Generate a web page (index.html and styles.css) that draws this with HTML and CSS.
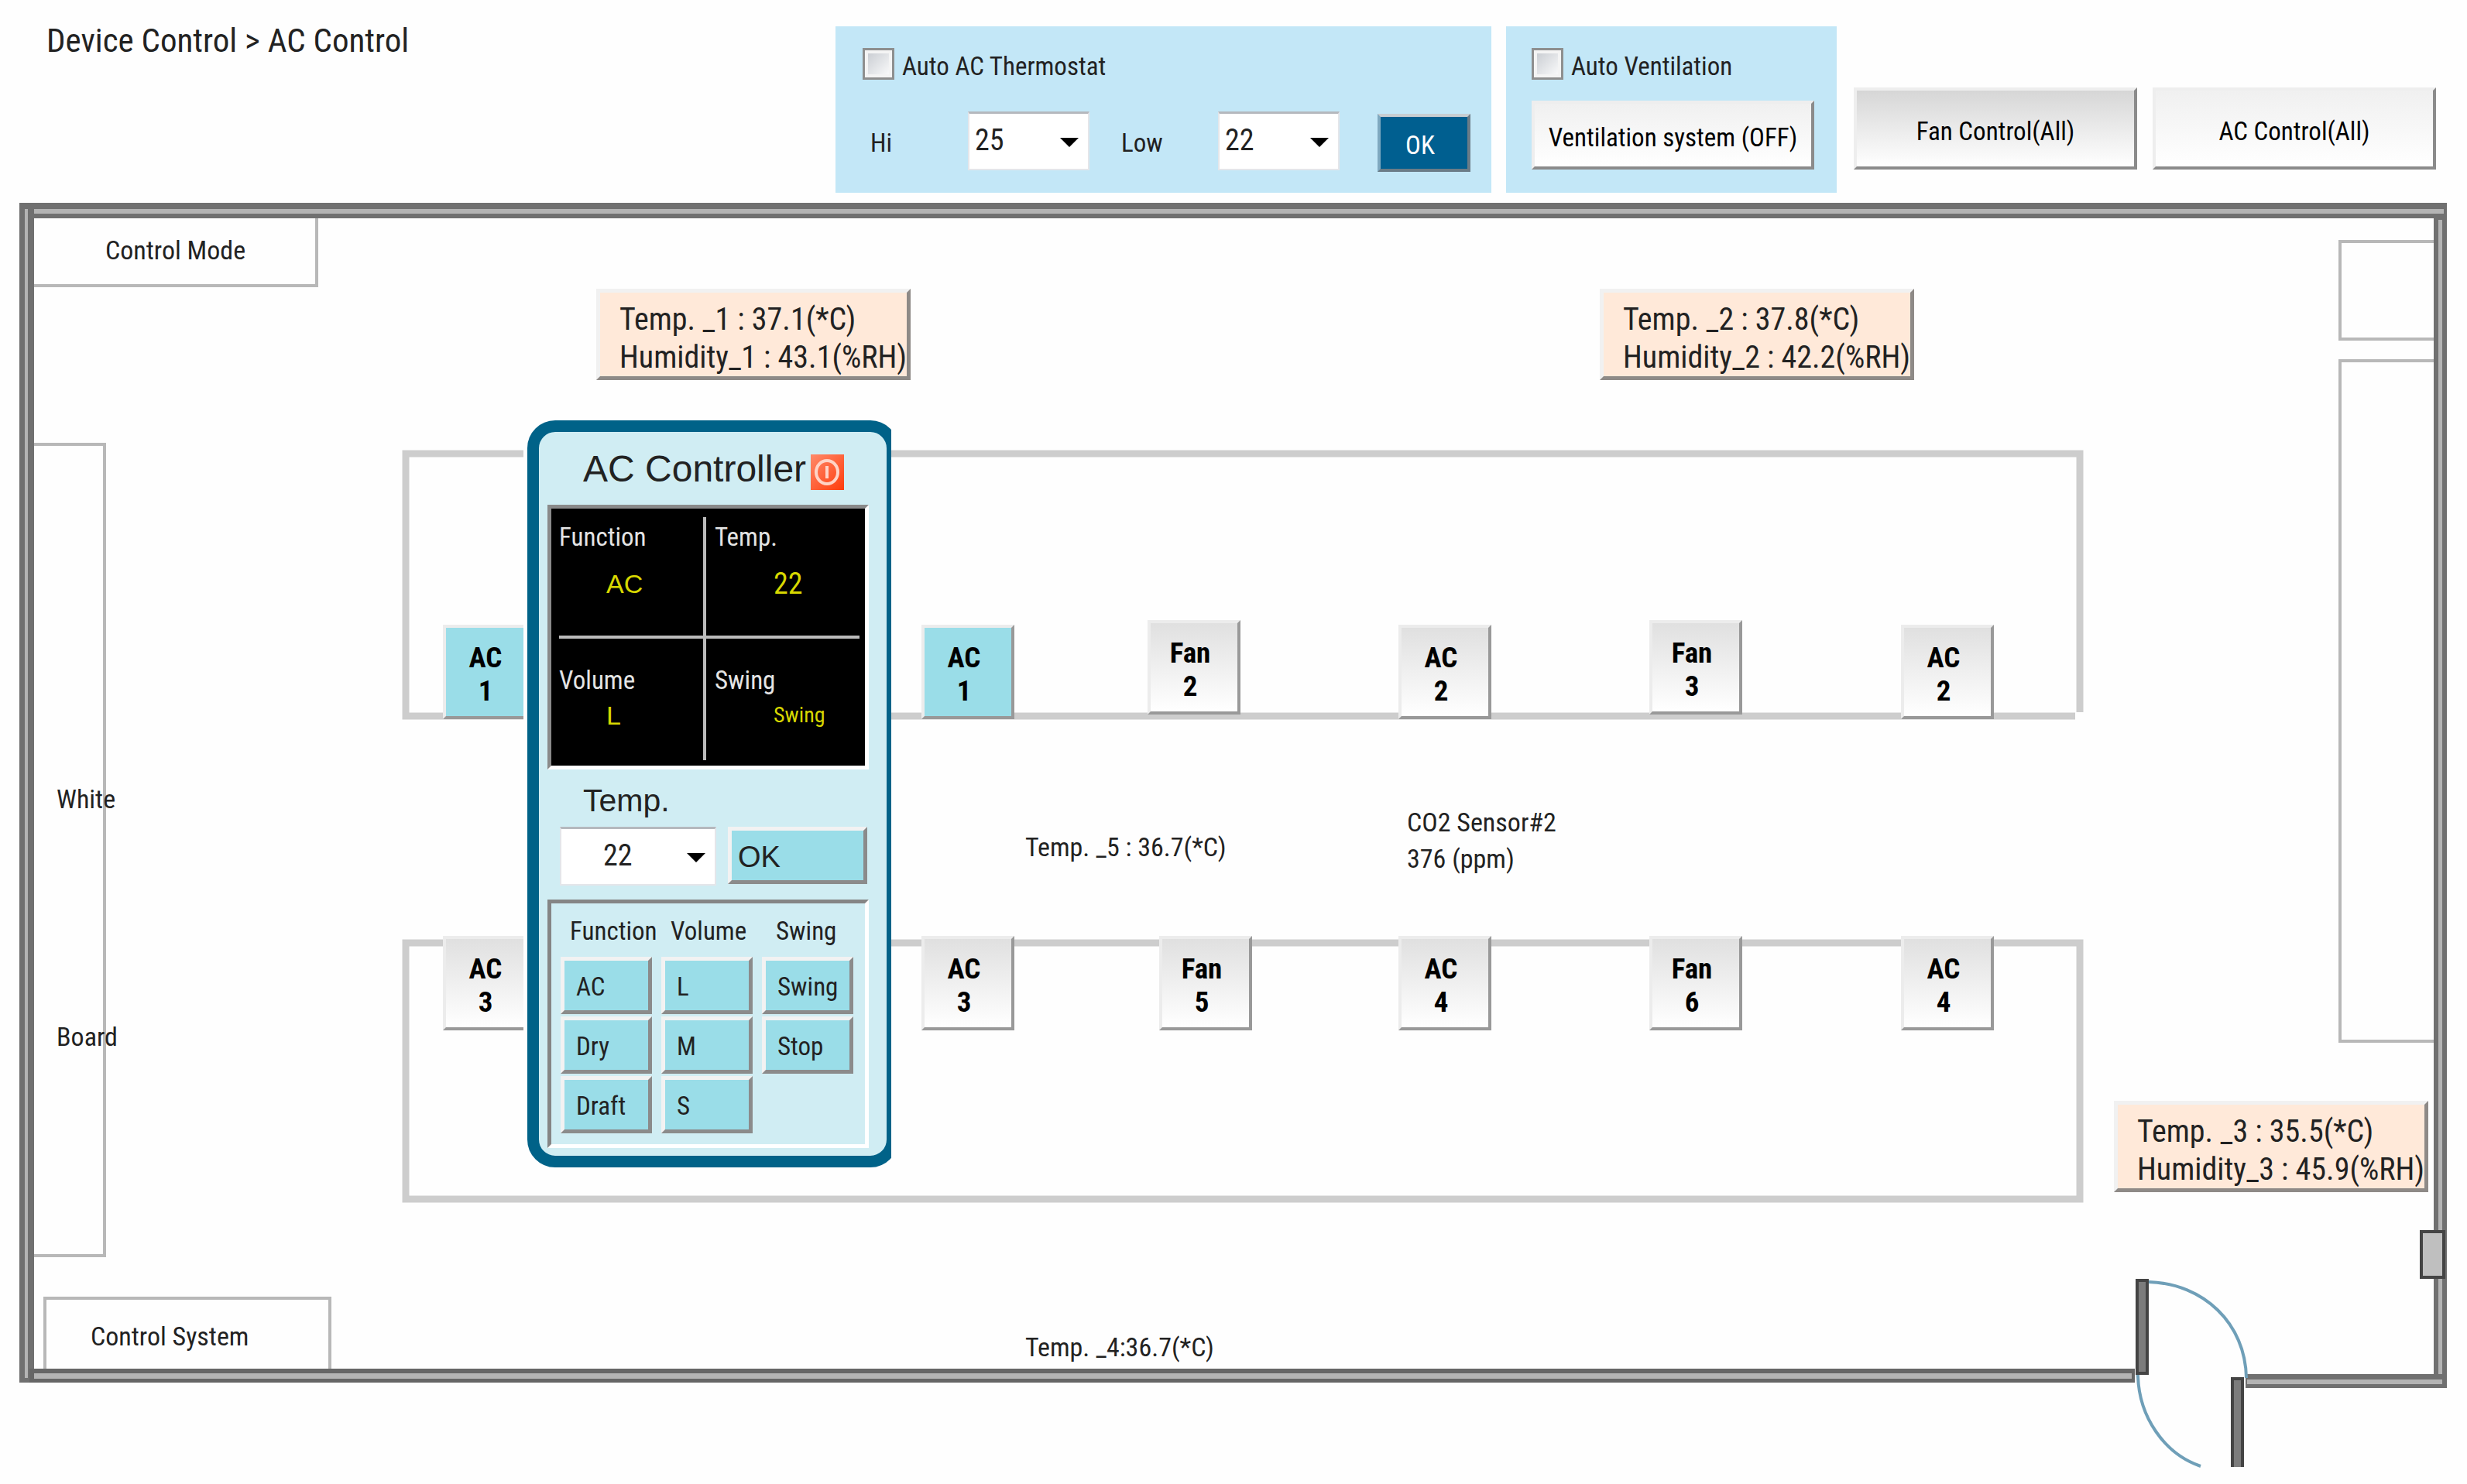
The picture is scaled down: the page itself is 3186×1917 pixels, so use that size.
FILE: index.html
```
<!DOCTYPE html>
<html lang="en">

<head>
    <meta charset="UTF-8">
    <meta name="viewport" content="width=device-width, initial-scale=1.0">
    <title>Device Control - AC Control</title>
    <link rel="stylesheet" href="styles.css">
</head>

<body>
    <header class="toolbar">
        <h1 class="breadcrumb">Device Control &gt; AC Control</h1>

        <form class="panel thermostat">
            <label class="check"><input type="checkbox" name="autoAc"> Auto AC Thermostat</label>
            <div class="range">
                <label class="range-label" for="hi">Hi</label>
                <div class="select">
                    <select id="hi" name="hi">
                        <option>25</option>
                        <option>26</option>
                        <option>27</option>
                    </select>
                </div>
                <label class="range-label low" for="low">Low</label>
                <div class="select">
                    <select id="low" name="low">
                        <option>22</option>
                        <option>23</option>
                        <option>24</option>
                    </select>
                </div>
                <button type="button" class="ok-dark">OK</button>
            </div>
        </form>

        <form class="panel ventilation">
            <label class="check"><input type="checkbox" name="autoVent"> Auto Ventilation</label>
            <button type="button" class="btn vent-btn">Ventilation system (OFF)</button>
        </form>

        <button type="button" class="btn all-btn all-fan">Fan Control(All)</button>
        <button type="button" class="btn all-btn">AC Control(All)</button>
    </header>

    <main class="plan">
        <svg class="walls" viewBox="0 250 3186 1667" aria-hidden="true">
            <!-- room fittings -->
            <g fill="none" stroke="#b8b8b8" stroke-width="4">
                <path d="M409 282V369H43" />
                <path d="M43 574H135V1622H43" />
                <path d="M58 1768V1677H426V1768" />
                <path d="M3145 312H3022V438H3145" />
                <path d="M3145 466H3022V1345H3145" />
            </g>
            <!-- desks -->
            <g fill="none" stroke="#cdcdcd" stroke-width="9">
                <path d="M2680 925H524V586H2686V920" />
                <path d="M524 1218H2686V1549H524Z" />
            </g>
            <!-- outer walls -->
            <g>
                <path fill="#707070" d="M25 262H3160V282H25Z" />
                <path fill="#b4b4b4" d="M32 270H3156V276H32Z" />
                <path fill="#707070" d="M25 268H44V1786H25Z" />
                <path fill="#b4b4b4" d="M32 270H36V1780H32Z" />
                <path fill="#707070" d="M3143 276H3160V1792H3143Z" />
                <path fill="#b4b4b4" d="M3149 284H3154V1776H3149Z" />
                <path fill="#666" d="M38 1768H2757V1786H38Z" />
                <path fill="#b4b4b4" d="M44 1774H2753V1781H44Z" />
                <path fill="#707070" d="M2900 1775H3160V1793H2900Z" />
                <path fill="#b4b4b4" d="M2902 1782H3154V1788H2902Z" />
            </g>
            <!-- doors -->
            <g stroke="#444" stroke-width="4" fill="#7c7c7c">
                <path d="M2760 1654H2773V1774H2760Z" />
                <path d="M2896 1895V1781H2883V1895" />
                <path fill="#bfbfbf" d="M3127 1591H3156V1650H3127Z" />
            </g>
            <g fill="none" stroke="#6f9fb8" stroke-width="4">
                <path d="M2775 1656C2846 1658 2900 1710 2901 1780" />
                <path d="M2761 1776C2762 1830 2795 1878 2842 1894" />
            </g>
        </svg>

        <p class="pin label control-mode">Control Mode</p>
        <p class="pin label white">White</p>
        <p class="pin label board">Board</p>
        <p class="pin label control-system">Control System</p>
        <p class="pin label temp-5">Temp. _5 : 36.7(*C)</p>
        <p class="pin label temp-4">Temp. _4:36.7(*C)</p>
        <p class="pin label co2">CO2 Sensor#2<br>376 (ppm)</p>

        <div class="pin sensor sensor-1">Temp. _1 : 37.1(*C)<br>Humidity_1 : 43.1(%RH)</div>
        <div class="pin sensor sensor-2">Temp. _2 : 37.8(*C)<br>Humidity_2 : 42.2(%RH)</div>
        <div class="pin sensor sensor-3">Temp. _3 : 35.5(*C)<br>Humidity_3 : 45.9(%RH)</div>

        <button type="button" class="pin node on ac-1a">AC<br>1</button>
        <button type="button" class="pin node on ac-1b">AC<br>1</button>
        <button type="button" class="pin node fan-2">Fan<br>2</button>
        <button type="button" class="pin node ac-2a">AC<br>2</button>
        <button type="button" class="pin node fan-3">Fan<br>3</button>
        <button type="button" class="pin node ac-2b">AC<br>2</button>
        <button type="button" class="pin node ac-3a">AC<br>3</button>
        <button type="button" class="pin node ac-3b">AC<br>3</button>
        <button type="button" class="pin node fan-5">Fan<br>5</button>
        <button type="button" class="pin node ac-4a">AC<br>4</button>
        <button type="button" class="pin node fan-6">Fan<br>6</button>
        <button type="button" class="pin node ac-4b">AC<br>4</button>

        <section class="pin popup">
            <div class="controller">
                <div class="controller-head">
                    <h2>AC Controller</h2>
                    <button type="button" class="power" aria-label="Power">
                        <svg viewBox="0 0 43 46">
                            <ellipse cx="21" cy="23" rx="14" ry="15" />
                            <path d="M21 15V31" />
                        </svg>
                    </button>
                </div>

                <div class="display">
                    <div class="cell">
                        <span>Function</span>
                        <b>AC</b>
                    </div>
                    <div class="cell">
                        <span>Temp.</span>
                        <b class="num">22</b>
                    </div>
                    <div class="cell">
                        <span>Volume</span>
                        <b>L</b>
                    </div>
                    <div class="cell">
                        <span>Swing</span>
                        <b class="small">Swing</b>
                    </div>
                </div>

                <label class="temp-label" for="temp">Temp.</label>
                <div class="temp-row">
                    <div class="select temp-select">
                        <select id="temp" name="temp">
                            <option>22</option>
                            <option>23</option>
                            <option>24</option>
                        </select>
                    </div>
                    <button type="button" class="key ok-key">OK</button>
                </div>

                <div class="keys">
                    <div class="key-col">
                        <span>Function</span>
                        <button type="button" class="key">AC</button>
                        <button type="button" class="key">Dry</button>
                        <button type="button" class="key">Draft</button>
                    </div>
                    <div class="key-col">
                        <span>Volume</span>
                        <button type="button" class="key">L</button>
                        <button type="button" class="key">M</button>
                        <button type="button" class="key">S</button>
                    </div>
                    <div class="key-col">
                        <span class="swing">Swing</span>
                        <button type="button" class="key">Swing</button>
                        <button type="button" class="key">Stop</button>
                    </div>
                </div>
            </div>
        </section>
    </main>
</body>

</html>
```
FILE: styles.css
```
* {
    box-sizing: border-box;
}

body {
    margin: 0;
    background-color: #fefefe;
    color: #222;
    font-family: "Roboto Condensed", "Liberation Sans", sans-serif;
    font-size: 33px;
    line-height: 44px;
}

button,
select {
    font: inherit;
    color: inherit;
    border-radius: 0;
    cursor: pointer;
}

/* top bar */
.toolbar {
    display: flex;
    align-items: flex-start;
    padding: 34px 40px 0 60px;
}

.breadcrumb {
    margin: 0 auto 0 0;
    font-size: 43px;
    line-height: 36px;
    font-weight: normal;
}

.panel {
    height: 215px;
    background-color: #c3e7f7;
}

.thermostat {
    padding: 28px 27px 0 35px;
    margin-right: 19px;
}

.ventilation {
    padding: 28px 29px 0 33px;
    margin-right: 22px;
}

.check {
    display: flex;
    align-items: center;
    gap: 10px;
    height: 40px;
    padding-top: 8px;
}

.check input {
    appearance: none;
    width: 41px;
    height: 41px;
    margin: -8px 0 0;
    border: 3px solid #8e8f8f;
    background: linear-gradient(135deg, #c4c8ce, #fff);
    box-shadow: inset 0 0 0 4px #f4f4f4;
}

.range {
    display: flex;
    align-items: center;
    margin-top: 40px;
}

.range-label {
    width: 136px;
    padding: 5px 0 0 10px;
}

.range-label.low {
    width: 125px;
    margin-left: 41px;
    padding-left: 0;
}

.select {
    position: relative;
    width: 157px;
    height: 76px;
}

.select select {
    appearance: none;
    width: 100%;
    height: 100%;
    padding: 0 0 4px 7px;
    border: 2px solid #e4e6ea;
    border-top: 3px solid #b5b9be;
    background-color: #fff;
    font-size: 38px;
}

/* drop-down arrow */
.select::after {
    content: "";
    position: absolute;
    right: 14px;
    top: 34px;
    border: 12px solid transparent;
    border-top-color: #000;
    border-bottom: 0;
    pointer-events: none;
}

.ok-dark {
    width: 120px;
    height: 75px;
    margin: 5px 0 0 49px;
    padding: 6px 10px 0 0;
    border: 4px solid;
    border-color: #c8ced2 #6b7c87 #6b7c87 #7fa9c0;
    background-color: #005f90;
    color: #fff;
}

.btn {
    padding: 0;
    border: 4px solid;
    border-color: #eee #8b8b8b #8b8b8b #eee;
    background: linear-gradient(#f0f0f0, #fff);
    color: #000;
}

.vent-btn {
    display: block;
    width: 365px;
    height: 89px;
    margin-top: 28px;
    padding-top: 6px;
}

.all-btn {
    width: 366px;
    height: 106px;
    margin-top: 79px;
    padding-top: 8px;
}

.all-fan {
    margin-right: 20px;
    background: linear-gradient(#d6d6d6, #fff);
}

/* floor plan: --x / --y are drawing units of the 3186 x 1667 plan */
.plan {
    position: relative;
    aspect-ratio: 3186 / 1667;
    margin-top: 1px;
    overflow: hidden;
}

.walls {
    display: block;
    width: 100%;
    height: 100%;
}

.pin {
    position: absolute;
    left: calc(var(--x) / 3186 * 100%);
    top: calc(var(--y) / 1667 * 100%);
    margin: 0;
    white-space: nowrap;
}

.label {
    font-size: 34px;
}

.control-mode { --x: 136; --y: 51; }
.white { --x: 73; --y: 760; }
.board { --x: 73; --y: 1067; }
.control-system { --x: 117; --y: 1454; }
.temp-5 { --x: 1324; --y: 822; }
.temp-4 { --x: 1324; --y: 1468; }
.co2 { --x: 1817; --y: 789; line-height: 47px; }

.sensor {
    width: 406px;
    padding: 10px 0 0 25px;
    border: 5px solid;
    border-color: #f1f1f1 #8e8a87 #8e8a87 #f1f1f1;
    background-color: #ffe9d9;
    font-size: 40px;
    line-height: 49px;
}

.sensor-1 { --x: 770; --y: 123; }
.sensor-2 { --x: 2066; --y: 123; }
.sensor-3 { --x: 2730; --y: 1172; }

.node {
    width: 120px;
    height: 122px;
    padding: 6px 10px 0 0;
    border: 4px solid;
    border-color: #ececec #999 #999 #ececec;
    background: linear-gradient(#e0e0e0, #fff);
    color: #000;
    font-size: 37px;
    font-weight: bold;
    line-height: 43px;
}

.node.on {
    background: #9adde8;
}

.ac-1a { --x: 572; --y: 557; }
.ac-1b { --x: 1190; --y: 557; }
.fan-2 { --x: 1482; --y: 551; }
.ac-2a { --x: 1806; --y: 557; }
.fan-3 { --x: 2130; --y: 551; }
.ac-2b { --x: 2455; --y: 557; }
.ac-3a { --x: 572; --y: 959; }
.ac-3b { --x: 1190; --y: 959; }
.fan-5 { --x: 1497; --y: 959; }
.ac-4a { --x: 1806; --y: 959; }
.fan-6 { --x: 2130; --y: 959; }
.ac-4b { --x: 2455; --y: 959; }

/* remote controller window, its right edge is cut by the window */
.popup {
    --x: 676;
    --y: 293;
    width: 475px;
    padding-left: 5px;
    overflow: hidden;
    background-color: #fefefe;
}

.controller {
    width: 479px;
    padding: 22px 0 10px 11px;
    border: 15px solid #006288;
    border-radius: 36px;
    background-color: #d0edf3;
}

.controller-head {
    display: flex;
    padding-left: 46px;
    margin-bottom: 19px;
}

.controller-head h2 {
    width: 294px;
    margin: 0;
    font-family: "Liberation Sans", sans-serif;
    font-size: 48px;
    font-weight: normal;
    line-height: 52px;
}

.power {
    width: 43px;
    height: 46px;
    margin-top: 7px;
    padding: 0;
    border: 0;
    background: linear-gradient(135deg, #ff8a6a, #ff3c0c);
}

.power svg {
    display: block;
    fill: none;
    stroke: #ffd3c6;
    stroke-width: 4;
}

.display {
    position: relative;
    display: grid;
    grid-template-columns: 197px 208px;
    grid-template-rows: 166px 166px;
    width: 415px;
    border: 5px solid;
    border-color: #8a8a8a #fff #fff #8a8a8a;
    background-color: #000;
    color: #e4e4e4;
}

/* cross lines */
.display::before,
.display::after {
    content: "";
    position: absolute;
    background-color: #bbb;
}

.display::before {
    left: 196px;
    top: 11px;
    bottom: 7px;
    width: 4px;
}

.display::after {
    left: 10px;
    right: 7px;
    top: 164px;
    height: 4px;
}

.cell {
    display: flex;
    flex-direction: column;
    gap: 16px;
    padding: 15px 0 0 10px;
}

.cell:nth-child(even) {
    padding-left: 14px;
}

.cell:nth-child(n+3) {
    gap: 1px;
    padding-top: 34px;
}

.cell b {
    padding-left: 61px;
    color: #d8d800;
    font-family: "Liberation Sans", sans-serif;
    font-size: 34px;
    font-weight: normal;
}

.cell:nth-child(even) b {
    padding-left: 76px;
}

.cell .num {
    font-family: inherit;
    font-size: 38px;
}

.cell .small {
    font-family: inherit;
    font-size: 28px;
}

.temp-label {
    display: block;
    padding-left: 46px;
    margin: 16px 0 10px;
    font-family: "Liberation Sans", sans-serif;
    font-size: 41px;
    line-height: 48px;
}

.temp-row {
    display: flex;
    gap: 15px;
    padding-left: 16px;
}

.temp-select {
    width: 202px;
}

.temp-select select {
    padding-left: 54px;
}

.key {
    width: 118px;
    height: 74px;
    padding: 4px 0 0 15px;
    border: 5px solid;
    border-color: #f2f2f2 #8b8b8b #8b8b8b #f2f2f2;
    background-color: #9adde8;
    text-align: left;
}

.ok-key {
    width: 180px;
    padding-left: 8px;
    font-family: "Liberation Sans", sans-serif;
    font-size: 38px;
}

.keys {
    display: flex;
    gap: 12px;
    width: 415px;
    margin-top: 18px;
    padding: 14px 12px 14px;
    border: 5px solid;
    border-color: #858585 #fff #fff #858585;
}

.key-col {
    display: flex;
    flex-direction: column;
    gap: 3px;
}

.key-col span {
    width: 106px;
    margin: 0 0 8px 12px;
}

.key-col .swing {
    margin-left: 18px;
    width: 100px;
}
```
